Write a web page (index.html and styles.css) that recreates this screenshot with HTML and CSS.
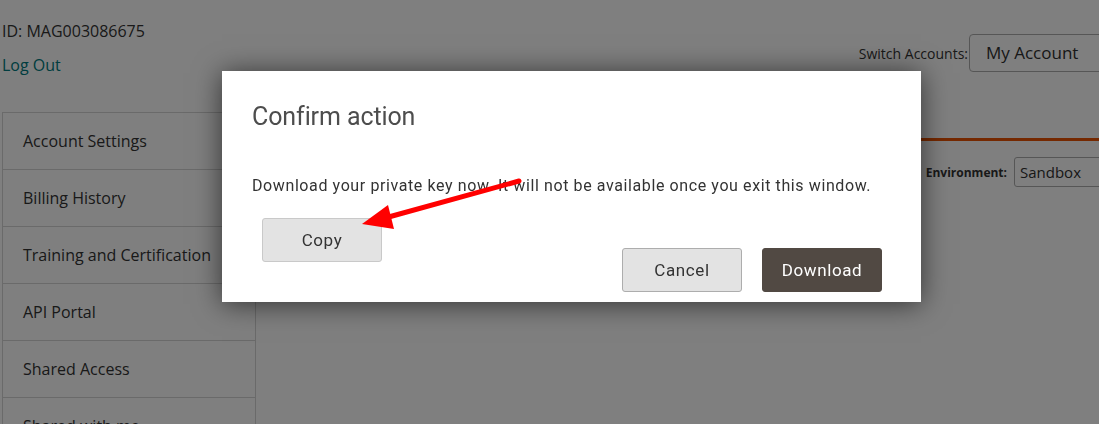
FILE: index.html
```html
<!DOCTYPE html>
<html>
<head>
<meta charset="utf-8">
<link rel="stylesheet" href="styles.css">
</head>
<body>
<div class="page">
  <header class="header">
    <div class="account">
      <div class="account-id">ID: MAG003086675</div>
      <a class="logout" href="#">Log Out</a>
    </div>
    <div class="switch">
      <span class="switch-label">Switch Accounts:</span>
      <div class="select select-account">My Account</div>
    </div>
  </header>
  <div class="main">
    <nav class="sidebar">
      <div class="nav-item">Account Settings</div>
      <div class="nav-item">Billing History</div>
      <div class="nav-item">Training and Certification</div>
      <div class="nav-item">API Portal</div>
      <div class="nav-item">Shared Access</div>
      <div class="nav-item">Shared with me</div>
    </nav>
    <section class="content">
      <div class="tabs"></div>
      <div class="env-row">
        <span class="env-label">Environment:</span>
        <div class="select select-env">Sandbox</div>
      </div>
    </section>
  </div>
</div>

<div class="overlay"></div>

<div class="modal">
  <h1 class="modal-title">Confirm action</h1>
  <p class="modal-text">Download your private key now. It will not be available once you exit this window.</p>
  <div class="modal-actions">
    <button class="btn btn-light btn-copy">Copy</button>
    <div class="modal-footer">
      <button class="btn btn-light">Cancel</button>
      <button class="btn btn-dark">Download</button>
    </div>
  </div>
</div>

<svg class="arrow" width="1099" height="424" viewBox="0 0 1099 424">
  <line x1="519" y1="181" x2="385" y2="218" stroke="#ff0000" stroke-width="5" stroke-linecap="round"/>
  <polygon points="362,224 388,205 394,229" fill="#ff0000"/>
</svg>
</body>
</html>
```

FILE: styles.css
```css
* { box-sizing: border-box; }

html, body {
  margin: 0;
  padding: 0;
  width: 1099px;
  height: 424px;
  overflow: hidden;
  background: #ffffff;
  font-family: "Open Sans", "Liberation Sans", sans-serif;
  color: #333333;
}

.page {
  position: relative;
  width: 1099px;
  height: 424px;
}

.header {
  display: flex;
  justify-content: space-between;
  align-items: flex-start;
  height: 112px;
}

.account {
  padding: 20px 0 0 2px;
}

.account-id {
  font-size: 16px;
  line-height: 22px;
  color: #333333;
}

.logout {
  display: block;
  margin-top: 12px;
  font-size: 16px;
  line-height: 22px;
  color: #007b80;
  text-decoration: none;
}

.switch {
  display: flex;
  align-items: center;
  margin-top: 34px;
  margin-right: -11px;
}

.switch-label {
  font-size: 14px;
  color: #333333;
  margin-right: 1px;
}

.select {
  border: 1px solid #adadad;
  border-radius: 4px;
  background: #ffffff;
  color: #303030;
}

.select-account {
  width: 141px;
  height: 38px;
  padding: 0 16px;
  font-size: 17px;
  line-height: 36px;
}

.main {
  display: flex;
  height: 312px;
}

.sidebar {
  width: 254px;
  margin-left: 2px;
  border-left: 1px solid #d4d4d4;
  border-right: 1px solid #d4d4d4;
  border-top: 1px solid #d4d4d4;
}

.nav-item {
  height: 57px;
  padding-left: 20px;
  font-size: 16px;
  line-height: 56px;
  border-bottom: 1px solid #d4d4d4;
  color: #333333;
  white-space: nowrap;
}

.content {
  flex: 1;
}

.tabs {
  height: 29px;
  border-bottom: 3px solid #eb5202;
}

.env-row {
  display: flex;
  justify-content: flex-end;
  align-items: center;
  margin-top: 16px;
  margin-right: -13px;
}

.env-label {
  font-size: 12px;
  font-weight: 700;
  color: #333333;
  margin-right: 7px;
}

.select-env {
  width: 98px;
  height: 30px;
  padding: 0 5px;
  font-size: 15px;
  line-height: 28px;
  border-radius: 3px;
}

.overlay {
  position: fixed;
  inset: 0;
  background: rgba(0, 0, 0, 0.5);
}

.modal {
  position: absolute;
  left: 222px;
  top: 71px;
  width: 699px;
  height: 231px;
  background: #ffffff;
  box-shadow: 0 2px 26px rgba(0, 0, 0, 0.6);
  padding: 30px 39px 0 30px;
  font-family: Roboto, "Liberation Sans", sans-serif;
}

.modal-title {
  margin: 0;
  font-size: 25px;
  font-weight: 400;
  line-height: 32px;
  color: #4d4d4d;
  letter-spacing: -0.1px;
}

.modal-text {
  margin: 42px 0 0 0;
  font-size: 16px;
  line-height: 22px;
  color: #333333;
  letter-spacing: 0.6px;
}

.modal-actions {
  display: flex;
  justify-content: space-between;
  align-items: flex-start;
  margin-top: 21px;
}

.btn {
  width: 120px;
  height: 44px;
  border-radius: 3px;
  font-family: Roboto, "Liberation Sans", sans-serif;
  font-size: 17px;
  letter-spacing: 0.6px;
  padding: 0;
  cursor: pointer;
}

.btn-light {
  background: #e3e3e3;
  border: 1px solid #adadad;
  color: #333333;
}

.btn-copy {
  margin-left: 10px;
  border-color: #c9c9c9;
}

.modal-footer {
  display: flex;
  gap: 20px;
  margin-top: 30px;
}

.btn-dark {
  background: #514943;
  border: 1px solid #514943;
  color: #ffffff;
}

.arrow {
  position: absolute;
  left: 0;
  top: 0;
  pointer-events: none;
}
```
